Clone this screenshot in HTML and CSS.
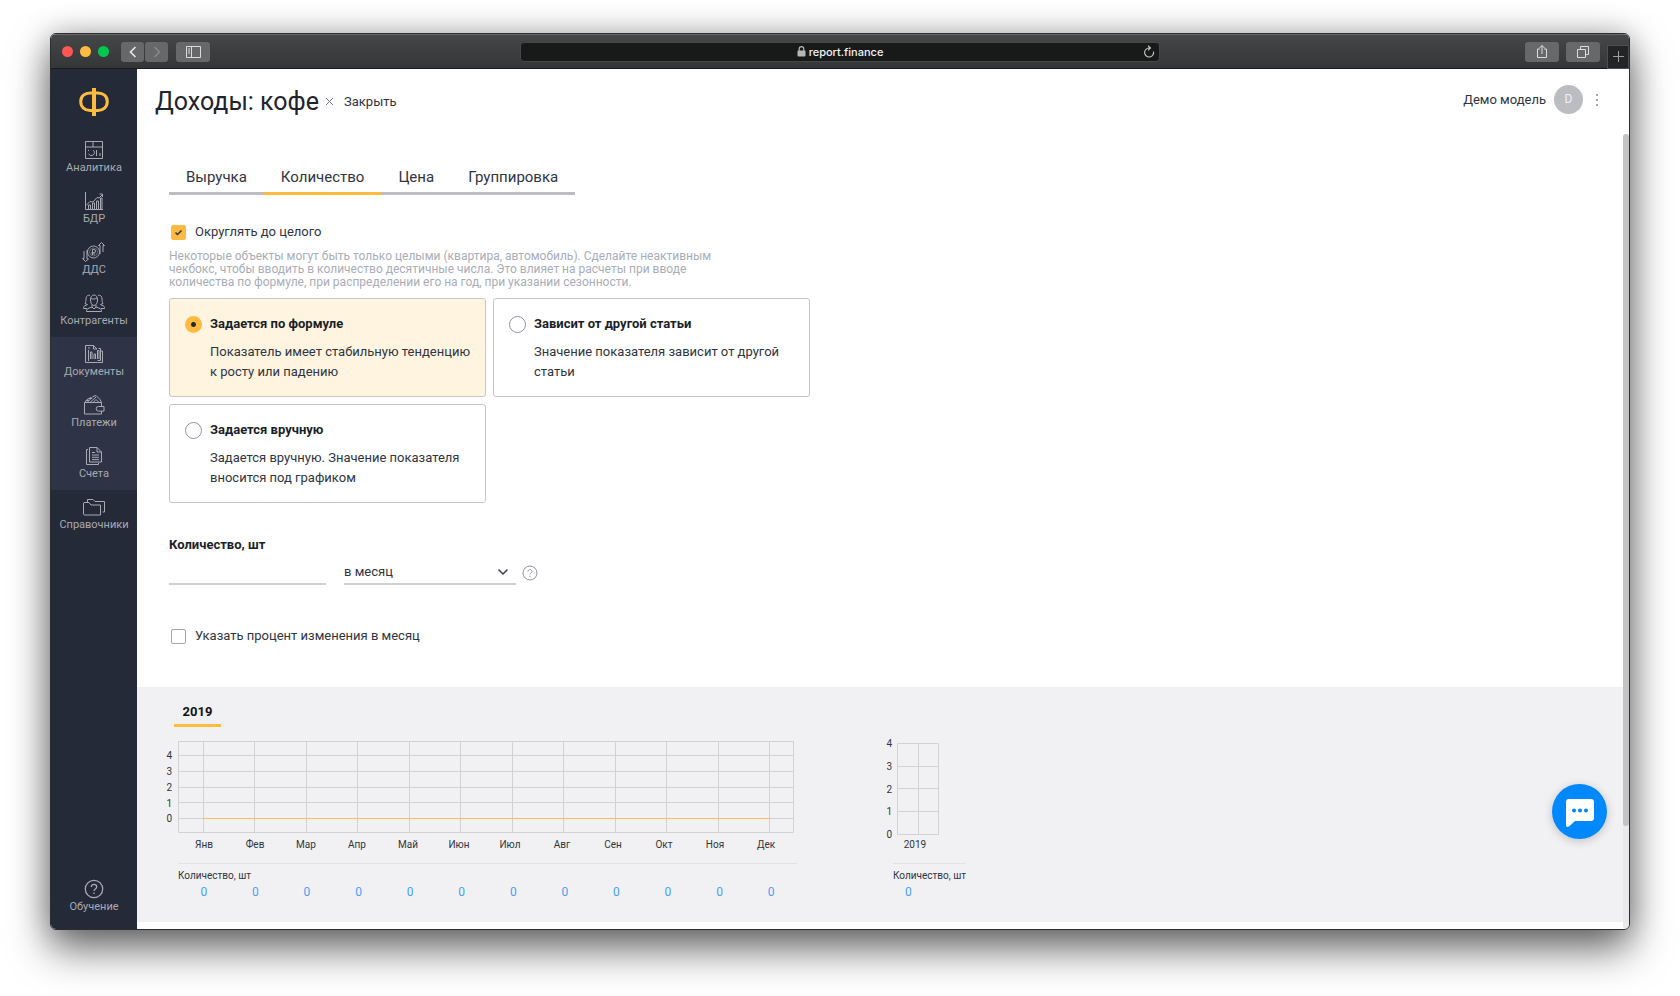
FILE: index.html
```html
<!DOCTYPE html>
<html lang="ru">
<head>
    <meta charset="UTF-8">
    <meta name="viewport" content="width=device-width, initial-scale=1.0">
    <title>Доходы: кофе</title>
    <link rel="stylesheet" href="styles.css">
</head>
<body>
    <div class="window">
        <div class="titlebar">
            <div class="titlebar-left">
                <div class="lights">
                    <span class="light red"></span>
                    <span class="light yellow"></span>
                    <span class="light green"></span>
                </div>
                <div class="nav-buttons">
                    <button class="bar-btn small" aria-label="Назад">
                        <svg width="12" height="14" viewBox="0 0 12 14"><path d="M8.5 2 3.5 7l5 5" stroke="#e8e8e8" stroke-width="1.6"/></svg>
                    </button>
                    <button class="bar-btn small" aria-label="Вперед">
                        <svg width="12" height="14" viewBox="0 0 12 14"><path d="M3.5 2l5 5-5 5" stroke="#8c8d8e" stroke-width="1.3"/></svg>
                    </button>
                </div>
                <button class="bar-btn" aria-label="Боковая панель">
                    <svg width="15" height="12" viewBox="0 0 15 12"><path d="M.5.5h14v11H.5zM5.5.5v11M2 3h2M2 5h2M2 7h2" stroke="#dcdcdc"/></svg>
                </button>
            </div>
            <div class="address">
                <span class="address-text">
                    <svg width="9" height="11" viewBox="0 0 9 11"><rect x="0.5" y="4.5" width="8" height="6" rx="1" fill="#b5b6b6"/><path d="M2.2 5V3a2.3 2.3 0 0 1 4.6 0v2" stroke="#b5b6b6" stroke-width="1.2"/></svg>
                    report.finance
                </span>
                <button class="reload" aria-label="Обновить">
                    <svg width="12" height="14" viewBox="0 0 12 14"><path d="M10.5 6.5A4.5 4.5 0 1 1 6 3h1M5 .7 7.5 3 5 5.3" stroke="#c8c8c8" stroke-width="1.1"/></svg>
                </button>
            </div>
            <div class="titlebar-right">
                <button class="bar-btn" aria-label="Поделиться">
                    <svg width="12" height="15" viewBox="0 0 12 15"><path d="M4 5H1.5v8.5h9V5H8M6 10V1.5M3.5 4 6 1.5 8.5 4" stroke="#dcdcdc"/></svg>
                </button>
                <button class="bar-btn" aria-label="Вкладки">
                    <svg width="12" height="12" viewBox="0 0 12 12"><path d="M.5 3.5h8v8h-8zM3.5 3.5v-3h8v8h-3" stroke="#dcdcdc"/></svg>
                </button>
                <button class="new-tab" aria-label="Новая вкладка">
                    <svg width="11" height="11" viewBox="0 0 11 11"><path d="M5.5 0v11M0 5.5h11" stroke="#9b9c9d"/></svg>
                </button>
            </div>
        </div>

        <div class="app">
            <nav class="sidebar">
                <a href="#" class="logo" aria-label="Ф">
                    <svg width="30" height="30" viewBox="0 0 30 30"><path d="M15 1v28" stroke-width="4"/><path d="M11 6h8c5 0 9.3 3 9.3 8.5s-4.3 9-9.3 9h-8c-5 0-9.3-3.5-9.3-9S6 6 11 6z" stroke-width="3"/></svg>
                </a>
                <a href="#" class="nav-item">
                    <svg viewBox="0 0 22 18"><path d="M2.5.5h17v17h-17zM2.5 6h17M10 .5V6M5 9.5h1M10.3 9.2a3 3 0 1 1-4.6 3.600M13.5 9v6M17 12v3"/></svg>
                    Аналитика
                </a>
                <a href="#" class="nav-item">
                    <svg viewBox="0 0 22 18"><path d="M2.5 0v17.5H20M5.5 17v-4h2v4M9.5 17v-6h2v6M13.5 17V9h2v8M17.5 17V6H19v11M3 13.5l4-4 3 .5 4-4.500 2 .5 3.500-3.500M16.500 2h3v3"/></svg>
                    БДР
                </a>
                <a href="#" class="nav-item">
                    <svg viewBox="0 1 22 18"><circle cx="10.5" cy="10" r="6"/><circle cx="10.5" cy="10" r="4" opacity=".45"/><path d="M9.5 13V7.5H11a1.6 1.6 0 0 1 0 3.200H8.500M8.500 12H12M17 12V3.500h-1.500L18.500.5l3 3H20V10M4 8v9h1.500l-3 2.500-3-3H1V9"/></svg>
                    ДДС
                </a>
                <a href="#" class="nav-item">
                    <svg viewBox="0 0 22 18"><path d="M7.500 6c0-3 1.200-5 3.500-5s3.500 2 3.500 5-1.500 5.500-3.500 5.500S7.500 9 7.500 6zM8 4.500c2 1 4 .5 6-.5M9 11v2l-4 1.500c-1 .5-1.500 1.500-1.500 3h15c0-1.500-.5-2.500-1.500-3L13 13v-2M9 13l2 2 2-2M7 1.500C4.500.5 3 2.500 3 5s-.5 3.500-1 4.500l2.500 1L1.500 12c-1 .5-1 1.500-1 2.500H4M15 1.500c2.500-1 4 1 4 3.500s.5 3.500 1 4.500l-2.500 1 3 1.500c1 .5 1 1.500 1 2.500H18"/></svg>
                    Контрагенты
                </a>
                <div class="nav-group">
                    <a href="#" class="nav-item">
                        <svg viewBox="0 0 22 18"><path d="M14.500 17.500h-12V.5h8L14 4M10.500.5V4H14M15.500 3.500h2v12h-3M17.500 6h2v11.500h-5M5 3h2M5 5.500h1M7.500 14V7H9v7M11 14V9h1.500v5M14.500 14V5.500H16V14M5.500 6v10"/></svg>
                        Документы
                    </a>
                    <a href="#" class="nav-item">
                        <svg viewBox="0 1 22 18"><path d="M18.500 16v3h-17V7.500h17v4M21 11.500h-5.500a2.300 2.300 0 0 0 0 4.600H21zM1.500 7.500 4 4.500l4-2M4 7.500l6-6 3-1 4 4 1.500 3M7 7.500l6-5.500M10 7.500l3-3 3 3M3 5.500h3M6 3.500h3"/></svg>
                        Платежи
                    </a>
                    <a href="#" class="nav-item">
                        <svg viewBox="0 0 22 18"><path d="M6.500.5H14L18.500 5v10h-12zM14 .5V5h4.500M5 2.500H3.500v15h12V16M9 5.500h3M9 8h7M9 10.300h7M9 12.600h7"/></svg>
                        Счета
                    </a>
                </div>
                <a href="#" class="nav-item">
                    <svg viewBox="0 0 22 18"><path d="M1 4.500h5L8 7h9.500v10h-16c-.5 0-1-.5-1-1V5zM4.500 4V1.500H10l2 2h9.500V14h-2"/></svg>
                    Справочники
                </a>
                <a href="#" class="nav-item help-item">
                    <svg viewBox="0 1 22 18"><circle cx="11" cy="10" r="8.700" stroke-width="1.300"/><path d="M8.300 8c0-3.500 5.400-3.500 5.400 0 0 2-2.700 2-2.700 4M11 13.500V15" stroke-width="1.300"/></svg>
                    Обучение
                </a>
            </nav>

            <main class="main">
                <header class="header">
                    <h1 class="title">Доходы: кофе</h1>
                    <button class="close">
                        <svg width="9" height="9" viewBox="0 0 9 9"><path d="M1 1l7 7M8 1 1 8" stroke="#6b6f78"/></svg>
                        Закрыть
                    </button>
                    <div class="user">
                        <span>Демо модель</span>
                        <span class="avatar">D</span>
                        <button class="dots" aria-label="Меню">
                            <svg width="4" height="14" viewBox="0 0 4 14"><circle cx="2" cy="2" r="1"/><circle cx="2" cy="7" r="1"/><circle cx="2" cy="12" r="1"/></svg>
                        </button>
                    </div>
                </header>

                <div class="scroll-area">
                    <div class="content">
                        <form class="form">
                            <div class="tabs">
                                <button type="button" class="tab">Выручка</button>
                                <button type="button" class="tab active">Количество</button>
                                <button type="button" class="tab">Цена</button>
                                <button type="button" class="tab">Группировка</button>
                            </div>

                            <label class="check">
                                <input type="checkbox" checked>
                                Округлять до целого
                            </label>
                            <p class="hint">Некоторые объекты могут быть только целыми (квартира, автомобиль). Сделайте неактивным<br>чекбокс, чтобы вводить в количество десятичные числа. Это влияет на расчеты при вводе<br>количества по формуле, при распределении его на год, при указании сезонности.</p>

                            <div class="cards">
                                <label class="card selected">
                                    <input type="radio" name="method" checked>
                                    <span class="card-text">
                                        <b>Задается по формуле</b>
                                        <span>Показатель имеет стабильную тенденцию<br>к росту или падению</span>
                                    </span>
                                </label>
                                <label class="card">
                                    <input type="radio" name="method">
                                    <span class="card-text">
                                        <b>Зависит от другой статьи</b>
                                        <span>Значение показателя зависит от другой<br>статьи</span>
                                    </span>
                                </label>
                                <label class="card">
                                    <input type="radio" name="method">
                                    <span class="card-text">
                                        <b>Задается вручную</b>
                                        <span>Задается вручную. Значение показателя<br>вносится под графиком</span>
                                    </span>
                                </label>
                            </div>

                            <label class="field-label" for="amount">Количество, шт</label>
                            <div class="fields">
                                <input type="text" id="amount" class="amount">
                                <div class="select-wrap">
                                    <select class="period" aria-label="Период">
                                        <option>в месяц</option>
                                        <option>в год</option>
                                    </select>
                                    <svg width="12" height="8" viewBox="0 0 12 8"><path d="M1.5 1.5 6 6l4.5-4.5" stroke="#3a3e48" stroke-width="1.5"/></svg>
                                </div>
                                <button type="button" class="help" aria-label="Подсказка">
                                    <svg width="16" height="16" viewBox="0 0 16 16"><circle cx="8" cy="8" r="7" stroke="#8e929b"/><path d="M6 6.5c0-2.6 4-2.6 4 0C10 8 8 8 8 9.5M8 10.8V12" stroke="#8e929b"/></svg>
                                </button>
                            </div>

                            <label class="check">
                                <input type="checkbox">
                                Указать процент изменения в месяц
                            </label>
                        </form>

                        <section class="panel">
                            <button class="year">2019</button>
                            <div class="charts">
                                <div class="chart">
                                    <svg width="637" height="119" viewBox="0 0 637 119" class="plot">
                                        <path class="grid" d="M18.5 5.5h615v91h-615zM18.5 19.5h615M18.5 35.5h615M18.5 51.5h615M18.5 66.5h615M18.5 82.5h615M43.5 5v91M94.5 5v91M146.5 5v91M197.5 5v91M249.5 5v91M300.5 5v91M352.5 5v91M403.5 5v91M455.5 5v91M506.5 5v91M558.5 5v91M609.5 5v91"/>
                                        <path class="series" d="M43 82.5h567"/>
                                        <g class="y-labels">
                                            <text x="12" y="23">4</text>
                                            <text x="12" y="39">3</text>
                                            <text x="12" y="55">2</text>
                                            <text x="12" y="71">1</text>
                                            <text x="12" y="86">0</text>
                                        </g>
                                        <g class="x-labels">
                                            <text x="44" y="112">Янв</text>
                                            <text x="95" y="112">Фев</text>
                                            <text x="146" y="112">Мар</text>
                                            <text x="197" y="112">Апр</text>
                                            <text x="248" y="112">Май</text>
                                            <text x="299" y="112">Июн</text>
                                            <text x="350" y="112">Июл</text>
                                            <text x="402" y="112">Авг</text>
                                            <text x="453" y="112">Сен</text>
                                            <text x="504" y="112">Окт</text>
                                            <text x="555" y="112">Ноя</text>
                                            <text x="606" y="112">Дек</text>
                                        </g>
                                    </svg>
                                    <table class="values">
                                        <thead>
                                            <tr><th colspan="12">Количество, шт</th></tr>
                                        </thead>
                                        <tbody>
                                            <tr>
                                                <td>0</td><td>0</td><td>0</td><td>0</td><td>0</td><td>0</td>
                                                <td>0</td><td>0</td><td>0</td><td>0</td><td>0</td><td>0</td>
                                            </tr>
                                        </tbody>
                                    </table>
                                </div>
                                <div class="chart total">
                                    <svg width="85" height="119" viewBox="0 0 85 119" class="plot">
                                        <path class="grid" d="M17.5 7.5h41v91h-41zM17.5 30.5h41M17.5 52.5h41M17.5 75.5h41M38.5 7v91"/>
                                        <g class="y-labels">
                                            <text x="12" y="11">4</text>
                                            <text x="12" y="34">3</text>
                                            <text x="12" y="57">2</text>
                                            <text x="12" y="79">1</text>
                                            <text x="12" y="102">0</text>
                                        </g>
                                        <g class="x-labels">
                                            <text x="35" y="112">2019</text>
                                        </g>
                                    </svg>
                                    <table class="values">
                                        <thead>
                                            <tr><th>Количество, шт</th></tr>
                                        </thead>
                                        <tbody>
                                            <tr><td>0</td></tr>
                                        </tbody>
                                    </table>
                                </div>
                            </div>
                        </section>
                    </div>
                    <div class="scrollbar"><div class="thumb"></div></div>
                </div>

                <button class="chat" aria-label="Чат">
                    <svg width="28" height="28" viewBox="0 0 28 28"><path d="M3 0h22a3 3 0 0 1 3 3v16a3 3 0 0 1-3 3H9l-6 5.5c-1.5 1-3 .5-3-1.5V3a3 3 0 0 1 3-3z" fill="#fff"/><circle cx="8" cy="11.5" r="2" fill="#0088ff"/><circle cx="14" cy="11.5" r="2" fill="#0088ff"/><circle cx="20" cy="11.5" r="2" fill="#0088ff"/></svg>
                </button>
            </main>
        </div>
    </div>
</body>
</html>
```
FILE: styles.css
```css
* {
    box-sizing: border-box;
}

body {
    margin: 0;
    height: 100vh;
    padding: 33px 50px 66px;
    background-color: #fff;
    font-family: Roboto, "Liberation Sans", sans-serif;
    font-size: 13px;
    line-height: 20px;
    color: #30343f;
}

button,
input,
select {
    font: inherit;
    color: inherit;
    margin: 0;
    padding: 0;
    border: none;
    background: none;
}

svg {
    fill: none;
    display: block;
    flex: none;
    overflow: visible;
}

a {
    color: inherit;
    text-decoration: none;
}

.window {
    height: 100%;
    display: flex;
    flex-direction: column;
    border: 1px solid #2b2d2f;
    border-radius: 6px;
    overflow: hidden;
    background-color: #fff;
    box-shadow: 0 20px 40px rgba(0, 0, 0, 0.55), 0 0 30px rgba(0, 0, 0, 0.25);
}

/* title bar */

.titlebar {
    display: grid;
    grid-template-columns: 1fr 640px 1fr;
    align-items: center;
    height: 35px;
    flex: none;
    background: linear-gradient(#444648, #343638);
    border-top: 1px solid #67696b;
    border-bottom: 1px solid #1a1b1c;
}

.titlebar-left {
    display: flex;
    align-items: center;
    padding-left: 11px;
}

.lights {
    display: flex;
    gap: 7px;
    margin-right: 12px;
}

.light {
    width: 11px;
    height: 11px;
    border-radius: 50%;
}

.red {
    background-color: #fc5753;
}

.yellow {
    background-color: #fdbc40;
}

.green {
    background-color: #00c94f;
}

.nav-buttons {
    display: flex;
    gap: 1px;
    margin-right: 8px;
}

.bar-btn {
    display: flex;
    align-items: center;
    justify-content: center;
    width: 34px;
    height: 20px;
    border-radius: 3px;
    background-color: #66686a;
}

.bar-btn.small {
    width: 23px;
}

.address {
    display: flex;
    align-items: center;
    height: 20px;
    padding: 0 4px 0 16px;
    border: 1px solid #46484a;
    border-radius: 4px;
    background-color: #181a1a;
    color: #f2f2f2;
    font-family: Inter, "Liberation Sans", sans-serif;
    font-size: 11px;
    font-weight: 500;
}

.address-text {
    flex: 1;
    display: flex;
    align-items: center;
    justify-content: center;
    gap: 3px;
}

.titlebar-right {
    display: flex;
    align-items: center;
    justify-content: flex-end;
    gap: 7px;
}

.new-tab {
    display: flex;
    align-items: center;
    justify-content: center;
    align-self: flex-end;
    width: 22px;
    height: 24px;
    margin-bottom: -7px;
    border: 1px solid #4c4e50;
    background-color: #222425;
}

/* sidebar */

.app {
    flex: 1;
    min-height: 0;
    display: flex;
}

.sidebar {
    width: 86px;
    flex: none;
    display: flex;
    flex-direction: column;
    background-color: #242a38;
    color: #a7abb3;
    font-size: 11px;
}

.logo {
    display: flex;
    justify-content: center;
    padding: 18px 0 16px;
}

.logo svg {
    stroke: #ffbb40;
}

.nav-item {
    display: flex;
    flex-direction: column;
    align-items: center;
    height: 51px;
    padding-top: 8px;
    line-height: 18px;
}

.nav-item svg {
    width: 22px;
    height: 18px;
    stroke: #a7abb3;
}

.nav-group {
    background-color: #2e3445;
}

.help-item {
    margin-top: auto;
    margin-bottom: 6px;
}

/* header */

.main {
    position: relative;
    flex: 1;
    min-width: 0;
    display: flex;
    flex-direction: column;
}

.header {
    display: flex;
    align-items: center;
    height: 65px;
    padding: 0 30px 0 18px;
    flex: none;
}

.title {
    margin: 0;
    font-size: 25px;
    font-weight: 400;
    color: #20232c;
}

.close {
    display: flex;
    align-items: center;
    gap: 10px;
    margin-left: 6px;
}

.user {
    display: flex;
    align-items: center;
    gap: 8px;
    margin-left: auto;
    padding-bottom: 4px;
}

.avatar {
    width: 29px;
    height: 29px;
    border-radius: 50%;
    background-color: #bcbdc1;
    color: #f0f0f2;
    font-size: 12px;
    line-height: 29px;
    text-align: center;
}

.dots {
    margin-left: 4px;
}

.dots svg {
    fill: #80848d;
}

/* content */

.scroll-area {
    flex: 1;
    min-height: 0;
    display: flex;
}

.content {
    flex: 1;
    min-width: 0;
    overflow: hidden;
}

.scrollbar {
    width: 6px;
    flex: none;
    background-color: #e9e9e9;
    border-radius: 3px;
}

.thumb {
    height: 87%;
    border-radius: 3px;
    background-color: #c3c3c3;
}

.form {
    padding: 28px 32px 41px;
}

.tabs {
    display: flex;
    width: fit-content;
    margin-bottom: 27px;
}

.tab {
    padding: 0 17px;
    line-height: 30px;
    font-size: 15px;
    border-bottom: 3px solid #bcbdc1;
}

.tab.active {
    border-bottom-color: #ffbb40;
}

.check {
    display: flex;
    align-items: center;
    gap: 9px;
    width: fit-content;
    padding-left: 2px;
}

.check input {
    appearance: none;
    width: 15px;
    height: 15px;
    border: 1px solid #a3a6ad;
    border-radius: 2px;
}

.check input:checked {
    border-color: #ffbb40;
    background: #ffbb40 url("data:image/svg+xml,%3Csvg xmlns='http://www.w3.org/2000/svg' viewBox='0 0 13 13'%3E%3Cpath d='M3.5 6.5l2 2 4-4' fill='none' stroke='%2330343f' stroke-width='1.5'/%3E%3C/svg%3E");
}

.hint {
    margin: 8px 0 9px;
    font-size: 12px;
    line-height: 13px;
    color: #a9adb8;
}

.cards {
    display: grid;
    grid-template-columns: repeat(2, 317px);
    gap: 7px;
}

.card {
    display: flex;
    gap: 8px;
    padding: 15px 15px 14px;
    border: 1px solid #c3c5c9;
    border-radius: 3px;
}

.card.selected {
    background-color: #fff4e0;
}

.card input {
    appearance: none;
    width: 17px;
    height: 17px;
    margin-top: 2px;
    flex: none;
    border: 1px solid #8e929b;
    border-radius: 50%;
    background-color: #fff;
}

.card input:checked {
    border: none;
    background: radial-gradient(circle, #242a38 2px, #ffbb40 3px);
}

.card-text {
    display: flex;
    flex-direction: column;
    gap: 8px;
}

.card-text b,
.field-label {
    color: #1b1e27;
    font-weight: 700;
}

.field-label {
    display: block;
    margin-top: 32px;
}

.fields {
    display: flex;
    align-items: center;
    margin-bottom: 41px;
}

.amount {
    width: 157px;
    height: 30px;
    margin-right: 18px;
    border-bottom: 2px solid #d0d1d4;
}

.select-wrap {
    display: flex;
    align-items: center;
    width: 172px;
    height: 30px;
    padding: 5px 7px 0 0;
    border-bottom: 2px solid #d0d1d4;
}

.period {
    appearance: none;
    flex: 1;
}

.help {
    padding: 5px 0 0 6px;
}

/* charts */

.panel {
    padding: 15px 23px 22px;
    background-color: #f1f1f3;
}

.year {
    display: block;
    width: 47px;
    margin-left: 14px;
    padding-bottom: 2px;
    border-bottom: 3px solid #ffbb40;
    color: #111;
    font-weight: 700;
}

.charts {
    display: flex;
    gap: 83px;
    margin-top: 9px;
}

.plot text {
    fill: #30343f;
    font-size: 10px;
}

.grid {
    stroke: #d2d2d4;
}

.series {
    stroke: #fdbe58;
}

.y-labels {
    text-anchor: end;
}

.x-labels {
    text-anchor: middle;
}

.values {
    width: 619px;
    margin: 8px 0 0 18px;
    border-top: 1px solid #e1e2e4;
    border-collapse: collapse;
    table-layout: fixed;
    line-height: 16px;
}

.values th {
    padding: 4px 0 0;
    font-size: 10px;
    font-weight: 400;
    text-align: left;
    white-space: nowrap;
}

.values td {
    padding: 0;
    color: #4ba0f8;
    font-size: 12px;
    text-align: center;
}

.total .values {
    width: 73px;
    margin-left: 13px;
}

.total .values td {
    padding-left: 12px;
    text-align: left;
}

.chat {
    position: absolute;
    right: 22px;
    bottom: 90px;
    display: flex;
    align-items: center;
    justify-content: center;
    width: 55px;
    height: 55px;
    padding-top: 2px;
    border-radius: 50%;
    background-color: #0088ff;
    box-shadow: 0 2px 10px rgba(0, 0, 0, 0.2);
}
```
